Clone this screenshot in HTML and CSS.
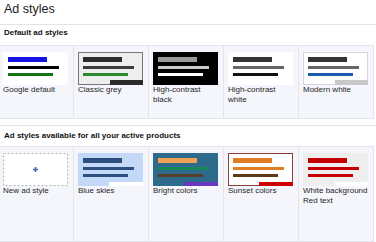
FILE: index.html
```html
<!DOCTYPE html>
<html>
<head>
<meta charset="utf-8">
<link rel="stylesheet" href="styles.css">
</head>
<body>
<header class="page-head"><h1 class="page-title">Ad styles</h1></header>

<section class="section">
  <h2 class="section-title">Default ad styles</h2>
  <div class="grid">
    <div class="cell cell-short">
      <svg class="thumb" viewBox="0 0 65 33"><rect width="65" height="33" fill="#fff"/><rect x="5" y="5" width="39" height="5" fill="#1414e4"/><rect x="5" y="14" width="51" height="3" fill="#000"/><rect x="5" y="21" width="45" height="3" fill="#147514"/></svg>
      <div class="label">Google default</div>
    </div>
    <div class="cell cell-short">
      <svg class="thumb" viewBox="0 0 65 33"><rect x="0.5" y="0.5" width="64" height="32" fill="#eeeeee" stroke="#777"/><rect x="5" y="5" width="39" height="5" fill="#2b2b2b"/><rect x="5" y="14" width="51" height="3" fill="#3c3c3c"/><rect x="5" y="21" width="45" height="3" fill="#2a8a2a"/><rect x="32" y="28" width="33" height="5" fill="#2b2b2b"/></svg>
      <div class="label">Classic grey</div>
    </div>
    <div class="cell cell-short">
      <svg class="thumb" viewBox="0 0 65 33"><rect width="65" height="33" fill="#000"/><rect x="5" y="5" width="39" height="5" fill="#999"/><rect x="5" y="14" width="51" height="3" fill="#ccc"/><rect x="5" y="21" width="45" height="3" fill="#fff"/></svg>
      <div class="label">High-contrast<br>black</div>
    </div>
    <div class="cell cell-short">
      <svg class="thumb" viewBox="0 0 65 33"><rect width="65" height="33" fill="#fff"/><rect x="5" y="5" width="39" height="5" fill="#333"/><rect x="5" y="14" width="51" height="3" fill="#666"/><rect x="5" y="21" width="45" height="3" fill="#111"/></svg>
      <div class="label">High-contrast<br>white</div>
    </div>
    <div class="cell cell-short">
      <svg class="thumb" viewBox="0 0 65 33"><rect x="0.5" y="0.5" width="64" height="32" fill="#fff" stroke="#d6d6d6"/><rect x="5" y="5" width="39" height="5" fill="#333"/><rect x="5" y="14" width="51" height="3" fill="#666"/><rect x="5" y="21" width="45" height="3" fill="#1a5cae"/><rect x="32" y="28" width="33" height="5" fill="#c8c8c8"/></svg>
      <div class="label">Modern white</div>
    </div>
  </div>
</section>

<section class="section section-second">
  <h2 class="section-title">Ad styles available for all your active products</h2>
  <div class="grid">
    <div class="cell cell-tall">
      <svg class="thumb" viewBox="0 0 65 33"><rect x="0.5" y="0.5" width="64" height="32" fill="#fff" stroke="#b5b5b5" stroke-dasharray="2 2"/><path d="M30 16.5h5M32.5 14v5" stroke="#3d6bb3" stroke-width="1.6"/></svg>
      <div class="label">New ad style</div>
    </div>
    <div class="cell cell-tall">
      <svg class="thumb" viewBox="0 0 65 33"><rect width="65" height="33" fill="#c4d8f7"/><rect x="5" y="5" width="39" height="5" fill="#2d4f7f"/><rect x="5" y="14" width="51" height="3" fill="#2d4f7f"/><rect x="5" y="21" width="45" height="3" fill="#2d4f7f"/><rect x="31" y="29" width="34" height="4" fill="#fff"/></svg>
      <div class="label">Blue skies</div>
    </div>
    <div class="cell cell-tall">
      <svg class="thumb" viewBox="0 0 65 33"><rect width="65" height="33" fill="#2e6a8c"/><rect x="5" y="5" width="39" height="5" fill="#f0a057"/><rect x="5" y="14" width="51" height="3" fill="#17885b"/><rect x="5" y="21" width="45" height="3" fill="#5b3e28"/><rect x="31" y="29" width="34" height="4" fill="#6a37bf"/></svg>
      <div class="label">Bright colors</div>
    </div>
    <div class="cell cell-tall">
      <svg class="thumb" viewBox="0 0 65 33"><rect x="0.5" y="0.5" width="64" height="32" fill="#fff" stroke="#8c3b3b"/><rect x="5" y="5" width="39" height="5" fill="#e07d26"/><rect x="5" y="14" width="51" height="3" fill="#e07d26"/><rect x="5" y="21" width="45" height="3" fill="#5c3a1a"/><rect x="31" y="29" width="34" height="4" fill="#cc0000"/></svg>
      <div class="label">Sunset colors</div>
    </div>
    <div class="cell cell-tall">
      <svg class="thumb" viewBox="0 0 65 33"><rect width="65" height="33" fill="#eeeeee"/><rect x="5" y="5" width="39" height="5" fill="#c40000"/><rect x="5" y="14" width="51" height="3" fill="#c40000"/><rect x="5" y="21" width="45" height="3" fill="#c40000"/><rect x="32" y="29" width="33" height="4" fill="#fff"/></svg>
      <div class="label">White background<br>Red text</div>
    </div>
  </div>
</section>
</body>
</html>
```
FILE: styles.css
```css
html, body {
  margin: 0;
  padding: 0;
  background: #fff;
}
body {
  font-family: "Liberation Sans", Arial, sans-serif;
  color: #222;
  width: 376px;
  overflow: hidden;
}
.page-head {
  padding: 1px 4px 7px;
  border-bottom: 1px solid #e4e4e4;
}
.page-title {
  margin: 0;
  font-size: 12.5px;
  line-height: 16px;
  font-weight: normal;
  color: #1a1a1a;
}
.section-title {
  margin: 0;
  padding: 3px 4px 7px;
  font-size: 8px;
  line-height: 10px;
  font-weight: bold;
  color: #111;
}
.section-second {
  margin-top: 6px;
  border-top: 1px solid #e4e4e4;
}
.section-second .section-title {
  padding-top: 5px;
  padding-bottom: 5px;
}
.grid {
  display: grid;
  grid-template-columns: repeat(5, 74px);
  gap: 1px;
  width: max-content;
  margin-left: -2px;
  background: #e3e5ee;
  border: 1px solid #e3e5ee;
}
.cell {
  background: #f5f6fb;
  padding: 6px 4px 0;
  box-sizing: border-box;
}
.cell-short {
  height: 72px;
}
.cell-tall {
  height: 94px;
}
.thumb {
  display: block;
  width: 65px;
  height: 33px;
}
.label {
  font-size: 8px;
  line-height: 10px;
  color: #1e1e1e;
  white-space: nowrap;
}
```
